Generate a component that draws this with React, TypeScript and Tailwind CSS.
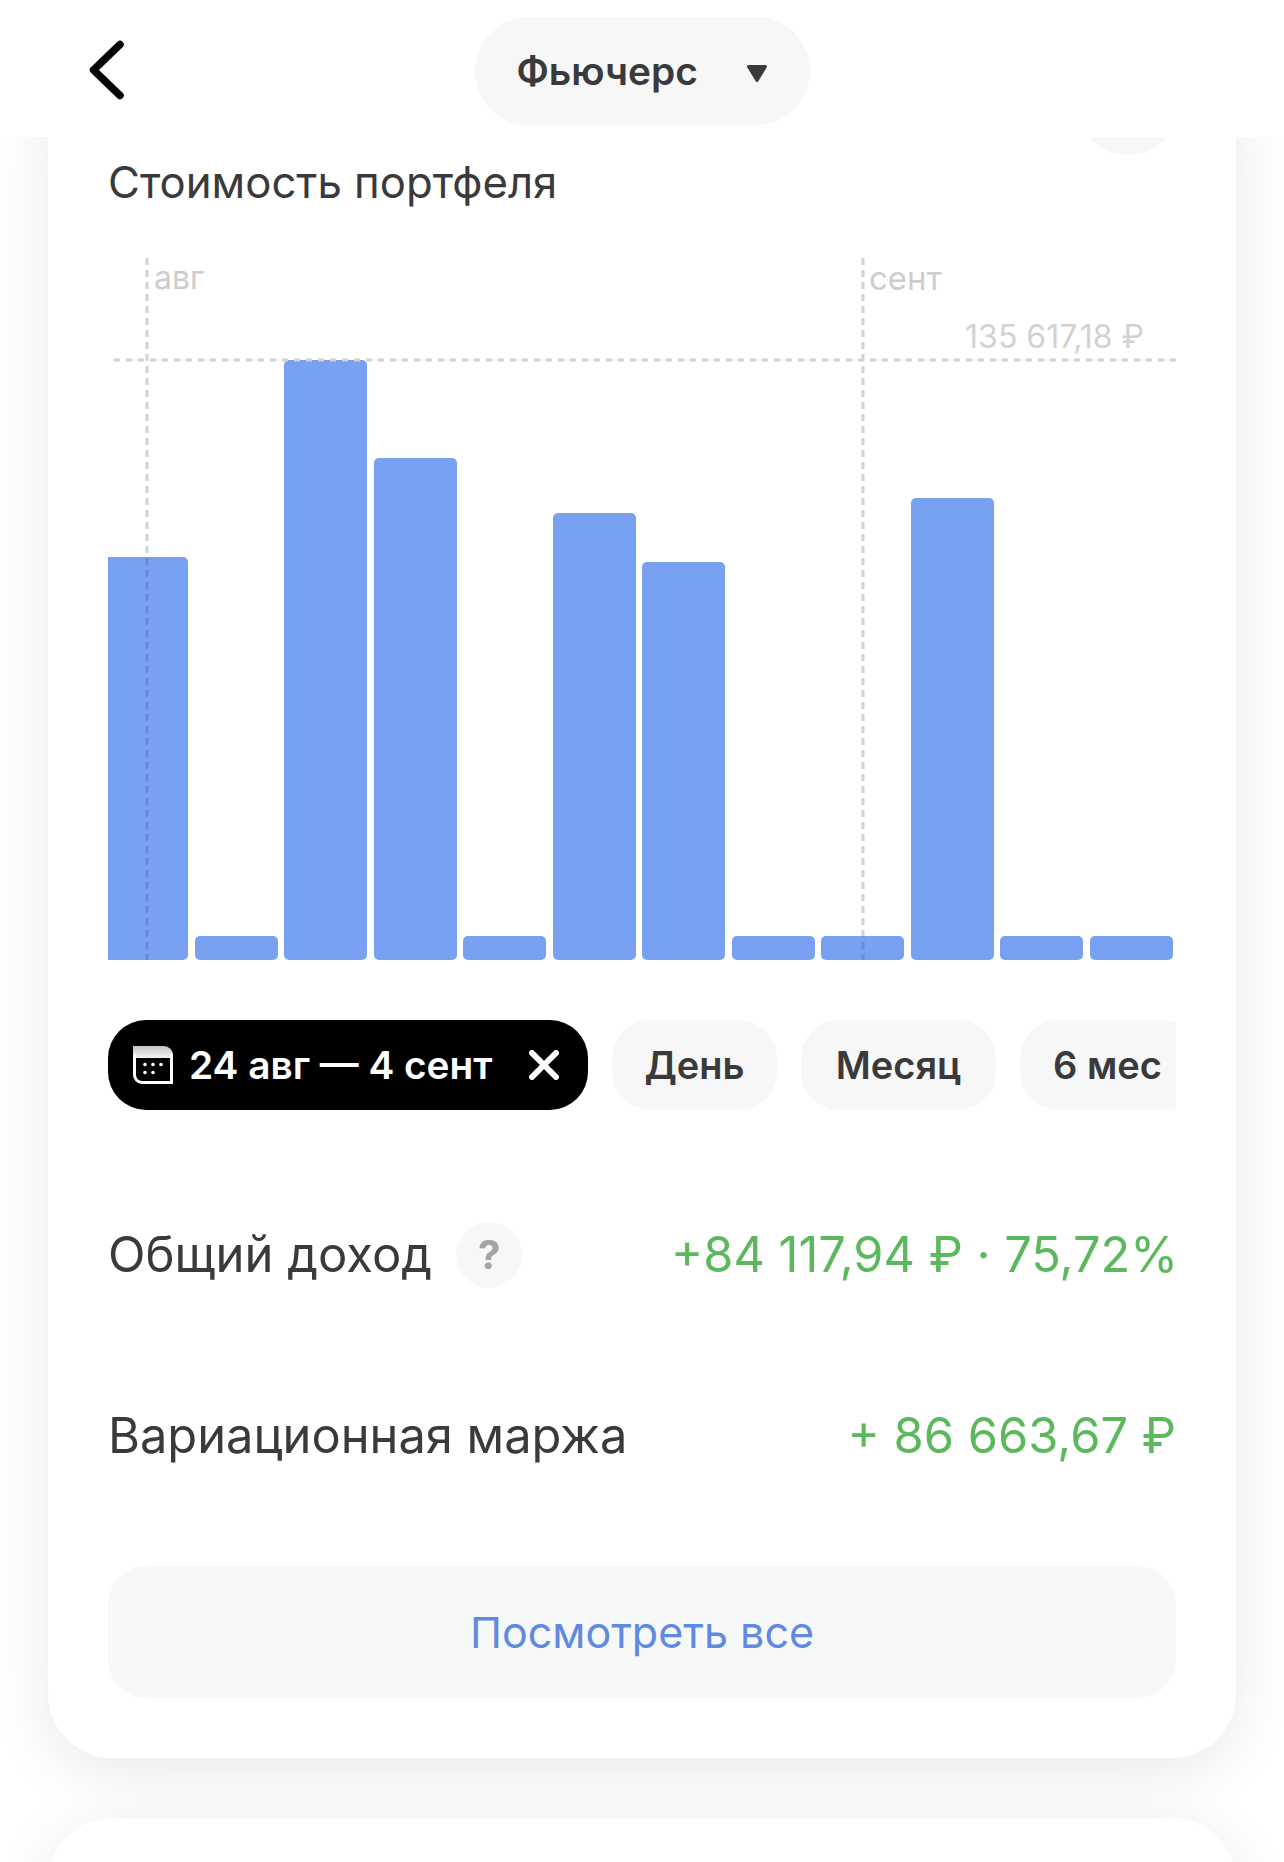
const bars = [403, 24, 600, 502, 24, 447, 398, 24, 24, 462, 24, 24];

function CalendarIcon() {
  return (
    <svg width="40" height="38" viewBox="0 0 40 38" fill="none" className="shrink-0">
      <defs>
        <linearGradient id="calendarTop" x1="0" y1="0" x2="0" y2="1">
          <stop offset="0" stopColor="#c4c4c4" />
          <stop offset="1" stopColor="#f4f4f4" />
        </linearGradient>
      </defs>
      <path d="M0 0h31a9 9 0 0 1 9 9v3H0z" fill="url(#calendarTop)" />
      <path d="M1.5 8v21a7.5 7.5 0 0 0 7.5 7.5h29.5V8" stroke="white" strokeWidth="3" />
      <circle cx="12" cy="18.5" r="1.8" fill="white" />
      <circle cx="20" cy="18.5" r="1.8" fill="white" />
      <circle cx="28" cy="18.5" r="1.8" fill="white" />
      <circle cx="12" cy="26.5" r="1.8" fill="white" />
      <circle cx="20" cy="26.5" r="1.8" fill="white" />
    </svg>
  );
}

function Chart() {
  return (
    <div className="relative h-[702px] overflow-hidden">
      <div className="flex h-full items-end gap-[6.5px]">
        {bars.map((h, i) => (
          <div
            key={i}
            className={`shrink-0 rounded-[5px] bg-[#78a1f2] ${i === 0 ? "w-[80px] rounded-l-none" : "w-[83px]"}`}
            style={{ height: h }}
          />
        ))}
      </div>
      {/* grid lines go over the bars */}
      <svg className="absolute inset-0" width="1069" height="702" fill="none">
        <line x1="39" y1="0" x2="39" y2="702" stroke="#3c4664" strokeOpacity="0.24" strokeWidth="3" strokeDasharray="7 5" />
        <line x1="755" y1="0" x2="755" y2="702" stroke="#3c4664" strokeOpacity="0.24" strokeWidth="3" strokeDasharray="7 5" />
        <line x1="6" y1="102" x2="1069" y2="102" stroke="#d2d2d2" strokeWidth="3" strokeDasharray="6 6" />
      </svg>
      <span className="absolute left-[46px] top-[2px] text-[32px] leading-[36px] text-[#cdcdcd]">авг</span>
      <span className="absolute left-[761px] top-[2px] text-[33px] leading-[36px] text-[#cdcdcd]">сент</span>
      <span className="absolute right-[32px] top-[61px] text-[32px] leading-[36px] text-[#d2d2d2]">135 617,18 ₽</span>
    </div>
  );
}

function Chip({ label, className }: { label: string; className: string }) {
  return (
    <div className={`flex h-[90px] shrink-0 items-center rounded-[38px] bg-[#f7f7f7] text-[38px] font-semibold text-[#3a3a3c] ${className}`}>
      {label}
    </div>
  );
}

export default function App() {
  return (
    <div className="h-[1862px] overflow-hidden bg-white font-['Inter',sans-serif]">
      <header className="relative z-10 flex h-[137px] items-start justify-center bg-white pt-[17px]">
        <svg className="absolute left-[89px] top-[40px]" width="36" height="60" viewBox="0 0 36 60" fill="none">
          <path d="M31 4.5 4.5 30 31 55.5" stroke="black" strokeWidth="7.5" strokeLinecap="round" strokeLinejoin="round" />
        </svg>
        <div className="flex h-[108px] w-[335px] items-center gap-[49px] rounded-[54px] bg-[#f7f7f7] pl-[42px] text-[38.8px] font-semibold text-[#3a3a3c]">
          Фьючерс
          <svg className="mt-[5px]" width="20" height="17" viewBox="0 0 20 17">
            <path d="M1.5 1.5h17L10 15.5z" fill="#3a3a3c" stroke="#3a3a3c" strokeWidth="3" strokeLinejoin="round" />
          </svg>
        </div>
      </header>

      <main className="px-[48px]">
        <section className="relative mt-[-77px] rounded-[64px] bg-white px-[60px] pb-[60px] pt-[98px] shadow-[0_12px_60px_rgba(0,0,0,0.09)]">
          <div className="absolute right-[59px] top-[-3px] size-[98px] rounded-full bg-[#f7f7f9]" />
          <h2 className="text-[43.7px] leading-[50px] text-[#3a3a3c]">Стоимость портфеля</h2>

          <div className="mt-[50px]">
            <Chart />
          </div>

          <div className="mt-[60px] flex gap-[24px] overflow-hidden">
            <div className="flex h-[90px] w-[480px] shrink-0 items-center rounded-[38px] bg-black pl-[25px] text-[38.8px] font-semibold text-white">
              <CalendarIcon />
              <span className="ml-[16px]">24 авг — 4 сент</span>
              <svg className="ml-auto mr-[29px]" width="30" height="30" viewBox="0 0 30 30" fill="none">
                <path d="M3 3l24 24M27 3 3 27" stroke="white" strokeWidth="6" strokeLinecap="round" />
              </svg>
            </div>
            <Chip label="День" className="w-[165px] justify-center" />
            <Chip label="Месяц" className="w-[195px] justify-center" />
            <Chip label="6 мес" className="w-[180px] pl-[33px] text-[38.6px]" />
          </div>

          <div className="mt-[112px] flex h-[66px] items-center justify-between text-[49px]">
            <div className="flex items-center gap-[24px] text-[#3a3a3c]">
              Общий доход
              <div className="flex size-[66px] items-center justify-center rounded-full bg-[#f7f7f7] text-[40px] font-bold text-[#a2a4a9]">?</div>
            </div>
            <div className="mr-[-2px] text-[48.7px] text-[#5cb85c]">+84 117,94 ₽ · 75,72%</div>
          </div>

          <div className="mt-[115px] flex h-[66px] items-center justify-between text-[48.8px]">
            <div className="text-[#3a3a3c]">Вариационная маржа</div>
            <div className="text-[#5cb85c]">+ 86 663,67 ₽</div>
          </div>

          <button className="mt-[97px] h-[132px] w-full rounded-[38px] bg-[#f7f8fa] text-[43px] text-[#5f8ae0]">
            Посмотреть все
          </button>
        </section>

        <section className="mt-[60px] h-[200px] rounded-[64px] bg-white shadow-[0_12px_60px_rgba(0,0,0,0.09)]" />
      </main>
    </div>
  );
}
